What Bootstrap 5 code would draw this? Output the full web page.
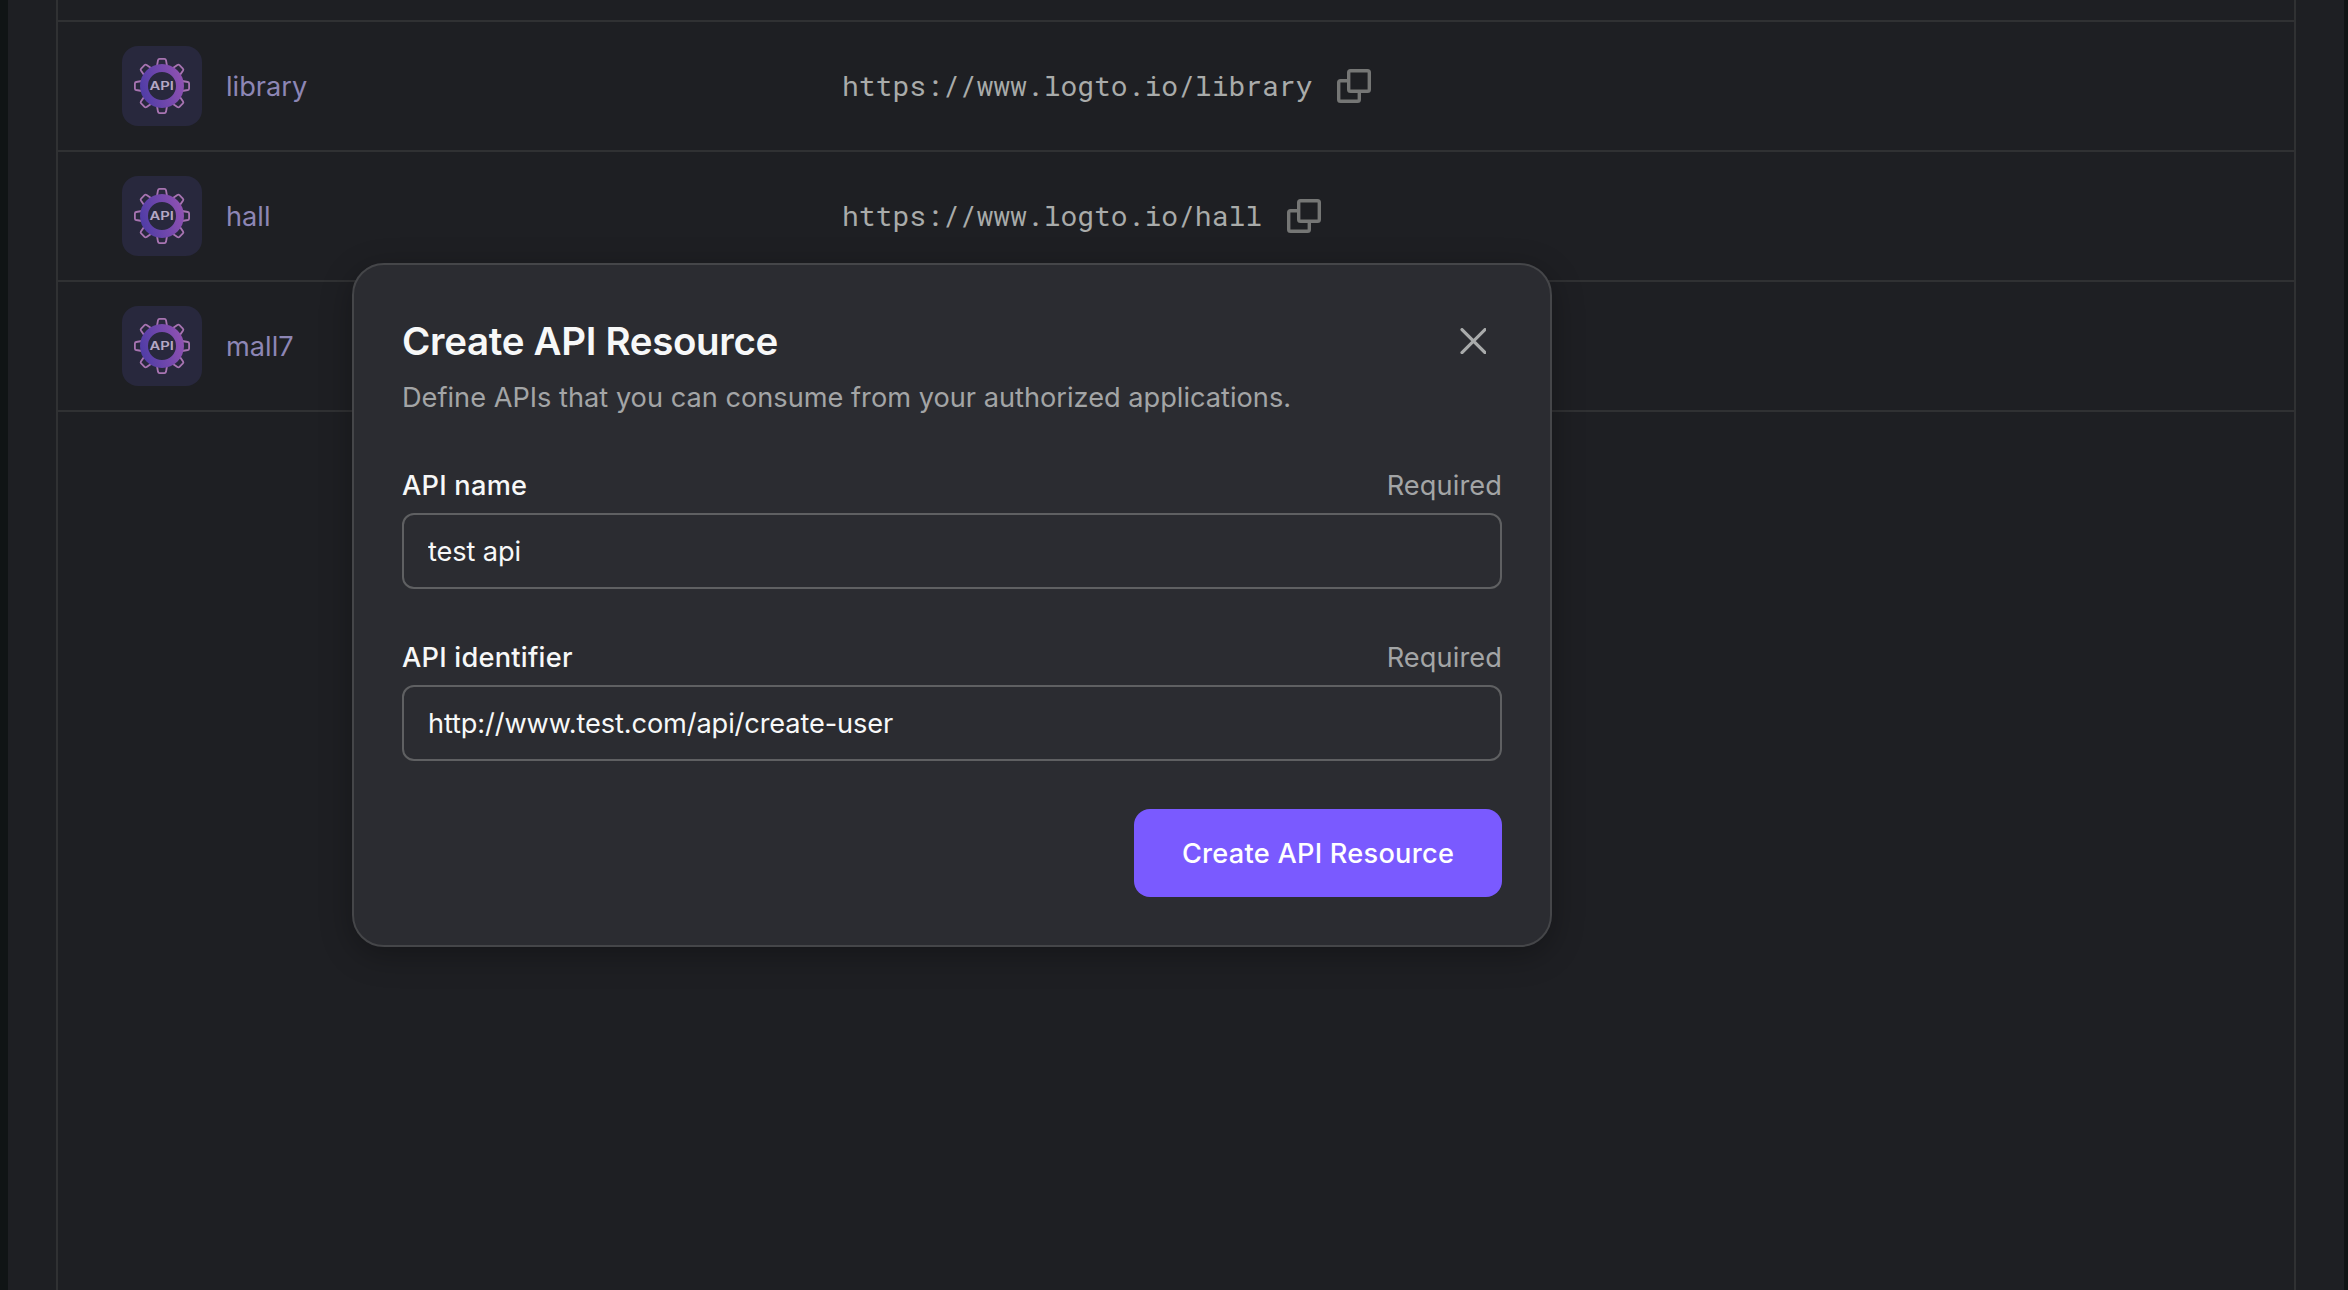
<!DOCTYPE html>
<html lang="en" data-bs-theme="dark">
<head>
<meta charset="utf-8">
<title>API resources</title>
<link href="https://cdn.jsdelivr.net/npm/bootstrap@5.3.0/dist/css/bootstrap.min.css" rel="stylesheet">
<style>
body{background:#101415;font-family:Inter,"Liberation Sans",sans-serif;font-size:27.2px;line-height:40px;letter-spacing:.25px;overflow:hidden}
.console-pane{height:1290px;margin:0 4px 0 8px;padding:0 48px;background:#1e1f23}
.resource-list{height:100%;padding-top:20px;border:2px solid #303133;border-width:0 2px}
.resource-item{height:130px;border-top:2px solid #303133;padding-left:64px}
.resource-end{border-top:2px solid #303133}
.resource-tile{width:80px;height:80px;border-radius:16px;background:#28283d}
.resource-name{width:616px;padding-top:2px;color:#8d86b5;letter-spacing:0}
.resource-url{font-family:"Roboto Mono","Liberation Mono",monospace;font-size:28px;letter-spacing:0;color:#a9abaa;margin-right:25px}
.dialog-box{left:352px;top:263px;width:1200px;height:684px;padding:48px;border:2px solid #454649;border-radius:32px;background:#2b2c31;box-shadow:0 8px 32px rgba(0,0,0,.3)}
.dialog-title{padding-top:1px;font-size:38.5px;font-weight:600;line-height:55px;letter-spacing:-.32px;color:#f7f8f8}
.dialog-text{margin-top:9px;color:#a3a5a6;letter-spacing:0}
.field-label{font-weight:500;color:#f7f8f8}
.field-hint{color:#a3a5a6;letter-spacing:.1px}
.field-group{margin-top:48px}
.field-head{margin-bottom:7px}
.dialog-text + .field-group{margin-top:48px}
.field-group + .field-group{margin-top:49px}
.field-input,.field-input:focus{height:76px;padding:0 24px;border:2px solid #5f6062;border-radius:12px;background:transparent;color:#f7f8f8;font-size:27.2px;letter-spacing:-.12px;line-height:40px}
.create-btn{width:368px;height:88px;padding:2px 0 0;border:0;border-radius:16px;background:#7a5aff;color:#fff;font-size:27.2px;font-weight:500;letter-spacing:.25px}
</style>
<script src="https://cdn.jsdelivr.net/npm/bootstrap@5.3.0/dist/js/bootstrap.bundle.min.js"></script>
</head>
<body>
<svg width="0" height="0" class="position-absolute">
<defs>
<linearGradient id="ringFill" x1="0" y1=".6" x2="1" y2=".35"><stop offset="0" stop-color="#4f3ca6"/><stop offset="1" stop-color="#9052b2"/></linearGradient>
<symbol id="gear" viewBox="0 0 80 80">
<g fill="none" stroke="#a874b2" stroke-width="1.8" stroke-linejoin="round">
<path id="tooth" d="M35 20 36 14.2Q36.3 12.9 37.6 12.9H42.4Q43.7 12.9 44 14.2L45 20"/>
<use href="#tooth" transform="rotate(45 40 40)"/><use href="#tooth" transform="rotate(90 40 40)"/><use href="#tooth" transform="rotate(135 40 40)"/><use href="#tooth" transform="rotate(180 40 40)"/><use href="#tooth" transform="rotate(225 40 40)"/><use href="#tooth" transform="rotate(270 40 40)"/><use href="#tooth" transform="rotate(315 40 40)"/>
</g>
<path fill="url(#ringFill)" fill-rule="evenodd" d="M40 18a22 22 0 1 0 0 44 22 22 0 0 0 0-44m0 8a14 14 0 1 1 0 28 14 14 0 0 1 0-28"/>
<text x="27.4" y="44.1" font-family="Inter,sans-serif" font-size="11.4" font-weight="600" letter-spacing="0" fill="#b5a8c5" textLength="24.4" lengthAdjust="spacingAndGlyphs">API</text>
</symbol>
<symbol id="copy" viewBox="0 0 34 34"><g fill="none" stroke="#757675" stroke-width="3.4" stroke-linejoin="round"><rect x="11.7" y="1.7" width="20.6" height="20.6" rx="1.8"/><path d="M11.7 11.7H3.5Q1.7 11.7 1.7 13.5V30.5Q1.7 32.3 3.5 32.3H20.5Q22.3 32.3 22.3 30.5V22.3"/></g></symbol>
</defs>
</svg>
<main class="console-pane">
<div class="resource-list">
<div class="resource-item d-flex align-items-center"><div class="resource-tile me-4"><svg class="d-block" width="80" height="80"><use href="#gear"/></svg></div><div class="resource-name">library</div><div class="resource-url">https://www.logto.io/library</div><svg width="34" height="34"><use href="#copy"/></svg></div>
<div class="resource-item d-flex align-items-center"><div class="resource-tile me-4"><svg class="d-block" width="80" height="80"><use href="#gear"/></svg></div><div class="resource-name">hall</div><div class="resource-url">https://www.logto.io/hall</div><svg width="34" height="34"><use href="#copy"/></svg></div>
<div class="resource-item d-flex align-items-center"><div class="resource-tile me-4"><svg class="d-block" width="80" height="80"><use href="#gear"/></svg></div><div class="resource-name">mall7</div></div>
<div class="resource-end"></div>
</div>
</main>
<section class="dialog-box position-absolute d-flex flex-column" role="dialog">
<header class="d-flex justify-content-between align-items-center"><h1 class="dialog-title m-0">Create API Resource</h1><svg class="d-block me-3" width="26" height="26" viewBox="0 0 26 26" fill="none" stroke="#a9abab" stroke-width="3.2" stroke-linecap="round"><path d="M2 1.6 25 24.6M25 1.6 2 24.6"/></svg></header>
<p class="dialog-text mb-0">Define APIs that you can consume from your authorized applications.</p>
<div class="field-group"><div class="field-head d-flex justify-content-between"><label class="field-label" for="apiName">API name</label><span class="field-hint">Required</span></div><input class="form-control field-input" id="apiName" type="text" value="test api"></div>
<div class="field-group"><div class="field-head d-flex justify-content-between"><label class="field-label" for="apiId">API identifier</label><span class="field-hint">Required</span></div><input class="form-control field-input" id="apiId" type="text" value="http://www.test.com/api/create-user"></div>
<footer class="d-flex justify-content-end mt-5"><button class="btn create-btn" type="button">Create API Resource</button></footer>
</section>
</body>
</html>
